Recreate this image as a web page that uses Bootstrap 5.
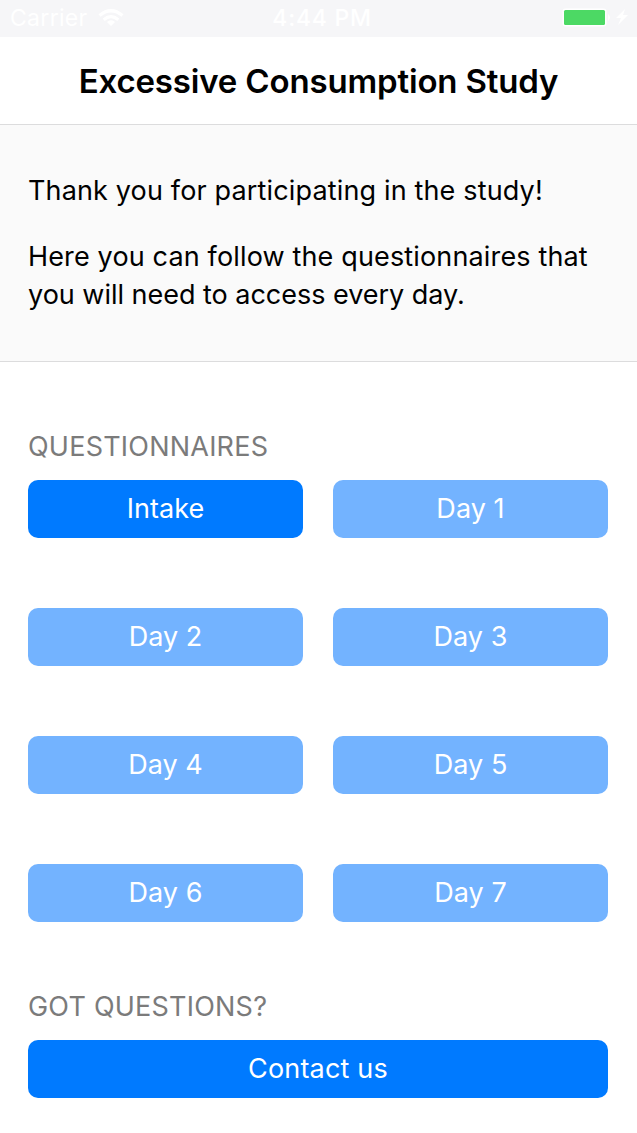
<!DOCTYPE html>
<html lang="en">
<head>
<meta charset="utf-8">
<meta name="viewport" content="width=device-width, initial-scale=1">
<title>Excessive Consumption Study</title>
<link href="https://cdn.jsdelivr.net/npm/bootstrap@5.3.0/dist/css/bootstrap.min.css" rel="stylesheet">
<style>
body { font-family: Inter, "Liberation Sans", sans-serif; font-size: 27px; line-height: 38px; color: #000; background: #fff; min-height: 1133px; overflow: hidden; }
.status-bar { height: 37px; background: #f6f6f8; color: #fff; font-size: 23px; line-height: 37px; padding: 0 8px 0 10px; }
.status-side { flex: 1 1 0; height: 35px; }
.carrier { letter-spacing: .3px; line-height: 37px; height: 37px; }
.wifi { margin-left: 10px; }
.clock { letter-spacing: .75px; padding-left: 5px; }
.title-bar { height: 88px; border-bottom: 1px solid #dcdcdd; }
.title-bar h1 { font-size: 33px; font-weight: 600; line-height: 40px; letter-spacing: -.16px; }
.intro { height: 237px; padding: 47px 28px 0; background: #fafafa; border-bottom: 1px solid #dcdcdd; letter-spacing: .15px; }
.intro p { margin-bottom: 28px; }
.tight { letter-spacing: -.02px; }
.content { padding: 66px 29px 0 28px; }
.section-label { font-size: 27px; line-height: 38px; font-weight: 400; color: #7b7b7b; margin-bottom: 14px; letter-spacing: .22px; }
.contact-label { margin-top: 66px; }
.day-grid { --bs-gutter-x: 30px; --bs-gutter-y: 70px; }
.btn-study { --bs-btn-bg: #007aff; --bs-btn-border-color: #007aff; --bs-btn-color: #fff; --bs-btn-disabled-bg: #73b3ff; --bs-btn-disabled-border-color: #73b3ff; --bs-btn-disabled-color: #fff; --bs-btn-disabled-opacity: 1; --bs-btn-border-radius: 10px; height: 58px; font-size: 27px; line-height: 56px; border: 0; padding: 0; letter-spacing: .05px; }
.contact { letter-spacing: .18px; }
</style>
</head>
<body>
<header class="status-bar d-flex">
  <div class="status-side d-flex align-items-center"><span class="carrier align-self-start">Carrier</span>
    <svg class="wifi" width="26" height="18" viewBox="0 0 26 18" fill="none" stroke="#fff" stroke-width="3.2"><path d="M1.500 6.500Q13-3 24.500 6.500M5.700 10.700Q13 4.700 20.300 10.700"/><path d="M13 11.300Q15.400 11.300 17 13L13 17L9 13Q10.600 11.300 13 11.300Z" fill="#fff" stroke="none"/></svg>
  </div>
  <span class="clock fw-medium">4:44 PM</span>
  <div class="status-side d-flex align-items-center justify-content-end">
    <svg width="70" height="22" viewBox="0 0 70 22"><rect x="3.500" y="1.500" width="44" height="18" rx="3" fill="#fff"/><rect x="5" y="3" width="41" height="15" rx="1.500" fill="#4cd964"/><path d="M49 7q4 3.500 0 7z" fill="#fff"/><path d="M66 2l-9 9h5l-3 7 10-10h-5z" fill="#fff"/></svg>
  </div>
</header>
<div class="title-bar d-flex align-items-center justify-content-center"><h1 class="mb-0">Excessive Consumption Study</h1></div>
<section class="intro">
  <p>Thank you for participating in the study!</p>
  <p class="mb-0">Here you can follow the questionnaires that<br><span class="tight">you will need to access every day.</span></p>
</section>
<main class="content">
  <h2 class="section-label">QUESTIONNAIRES</h2>
  <div class="row day-grid">
    <div class="col-6"><button class="btn btn-study w-100">Intake</button></div>
    <div class="col-6"><button class="btn btn-study w-100" disabled>Day 1</button></div>
    <div class="col-6"><button class="btn btn-study w-100" disabled>Day 2</button></div>
    <div class="col-6"><button class="btn btn-study w-100" disabled>Day 3</button></div>
    <div class="col-6"><button class="btn btn-study w-100" disabled>Day 4</button></div>
    <div class="col-6"><button class="btn btn-study w-100" disabled>Day 5</button></div>
    <div class="col-6"><button class="btn btn-study w-100" disabled>Day 6</button></div>
    <div class="col-6"><button class="btn btn-study w-100" disabled>Day 7</button></div>
  </div>
  <h2 class="section-label contact-label">GOT QUESTIONS?</h2>
  <button class="btn btn-study contact w-100">Contact us</button>
</main>
<script src="https://cdn.jsdelivr.net/npm/bootstrap@5.3.0/dist/js/bootstrap.bundle.min.js"></script>
</body>
</html>
